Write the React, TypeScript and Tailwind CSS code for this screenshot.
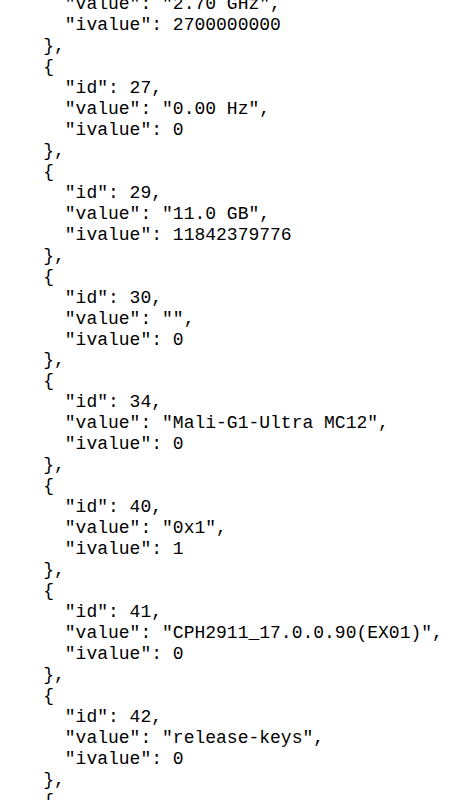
const lines = [
  '      "value": "2.70 GHz",',
  '      "ivalue": 2700000000',
  "    },",
  "    {",
  '      "id": 27,',
  '      "value": "0.00 Hz",',
  '      "ivalue": 0',
  "    },",
  "    {",
  '      "id": 29,',
  '      "value": "11.0 GB",',
  '      "ivalue": 11842379776',
  "    },",
  "    {",
  '      "id": 30,',
  '      "value": "",',
  '      "ivalue": 0',
  "    },",
  "    {",
  '      "id": 34,',
  '      "value": "Mali-G1-Ultra MC12",',
  '      "ivalue": 0',
  "    },",
  "    {",
  '      "id": 40,',
  '      "value": "0x1",',
  '      "ivalue": 1',
  "    },",
  "    {",
  '      "id": 41,',
  '      "value": "CPH2911_17.0.0.90(EX01)",',
  '      "ivalue": 0',
  "    },",
  "    {",
  '      "id": 42,',
  '      "value": "release-keys",',
  '      "ivalue": 0',
  "    },",
  "    {",
];

export default function App() {
  return (
    <div className="w-[450px] h-[800px] overflow-hidden bg-white">
      <pre className="-mt-[6px] font-['Liberation_Mono',monospace] text-[18px] leading-[20.97px] text-black">
        {lines.join("\n")}
      </pre>
    </div>
  );
}
